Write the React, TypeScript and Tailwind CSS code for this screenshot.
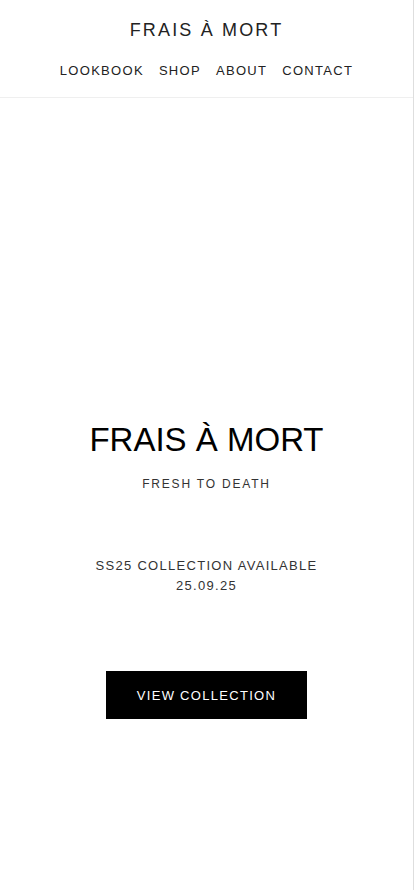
const navItems = ["LOOKBOOK", "SHOP", "ABOUT", "CONTACT"];

const App = () => {
  return (
    <div
      className="min-h-[890px] w-full bg-white border-r border-[#dedede]"
      style={{ fontFamily: '"Liberation Sans", Arial, sans-serif' }}
    >
      <header className="h-[98px] border-b border-[#efefef] flex flex-col items-center">
        <h1 className="mt-[19px] text-[18px] leading-[22px] tracking-[0.12em] text-[#222]">
          FRAIS À MORT
        </h1>
        <nav className="mt-[21px] flex gap-[15px]">
          {navItems.map((item) => (
            <a
              key={item}
              href="#"
              className="text-[13px] leading-[18px] tracking-[0.1em] text-[#222]"
            >
              {item}
            </a>
          ))}
        </nav>
      </header>

      <main className="flex flex-col items-center text-center pt-[323px] pb-[171px]">
        <h2 className="text-[33px] leading-[38px] text-black">FRAIS À MORT</h2>
        <p className="mt-[17px] text-[12px] leading-[16px] tracking-[0.15em] text-[#333]">
          FRESH TO DEATH
        </p>

        <div className="mt-16 text-[13px] leading-[20px] tracking-[0.1em] text-[#333]">
          <p>SS25 COLLECTION AVAILABLE</p>
          <p>25.09.25</p>
        </div>

        <a
          href="#"
          className="mt-[75px] w-[201px] h-12 bg-black text-white flex items-center justify-center text-[13px] leading-[20px] tracking-[0.1em] pt-px"
        >
          VIEW COLLECTION
        </a>
      </main>
    </div>
  );
};

export default App;
